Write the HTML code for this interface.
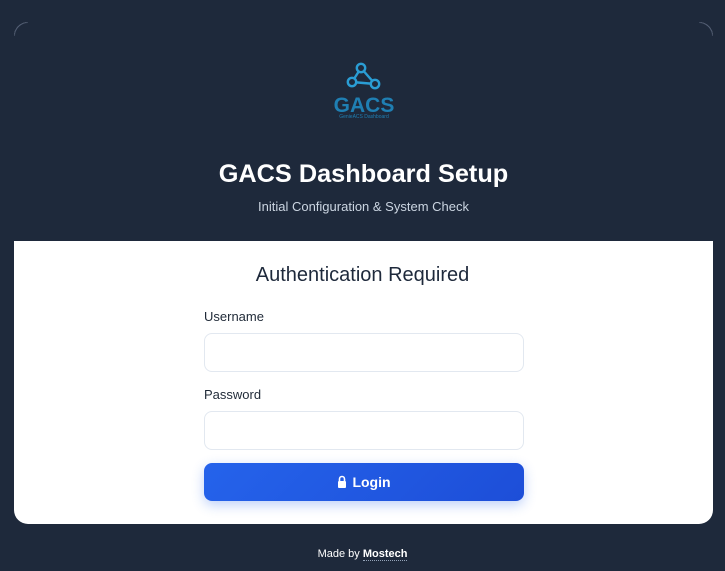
<!DOCTYPE html>
<html><head><style>
*{box-sizing:border-box;margin:0;padding:0}
body{width:725px;height:571px;background:#1e293b;font-family:"Liberation Sans",sans-serif;position:relative;overflow:hidden}
.card{position:absolute;left:14px;top:22px;width:699px;height:502px;border-radius:14px;overflow:hidden;background:#fff}
.head{height:219px;background:#1e293b;text-align:center;position:relative}
.corner{position:absolute;top:22px;width:14px;height:14px;border:1px solid #56627a;}
.cl{left:14px;border-right:none;border-bottom:none;border-top-left-radius:14px;-webkit-mask:linear-gradient(135deg,#000 30%,transparent 70%)}
.cr{left:699px;border-left:none;border-bottom:none;border-top-right-radius:14px;-webkit-mask:linear-gradient(225deg,#000 30%,transparent 70%)}
h1{position:absolute;top:138px;width:100%;color:#fff;font-size:25.3px;font-weight:bold}
.sub{position:absolute;top:177px;width:100%;color:#cbd5e1;font-size:13px}
h2{position:absolute;top:264px;width:100%;text-align:center;font-size:20px;font-weight:normal;color:#1e293b}
label{position:absolute;left:204px;font-size:13px;color:#1f2937}
.in{position:absolute;left:204px;width:320px;height:39px;border:1px solid #e2e8f0;border-radius:8px;background:#fff}
.btn{position:absolute;left:204px;top:463px;width:320px;height:38px;border-radius:8px;background:linear-gradient(135deg,#2563eb,#1d4ed8);box-shadow:0 4px 12px rgba(37,99,235,.3);color:#fff;font-size:14px;font-weight:bold;text-align:center;line-height:38px}
.foot{position:absolute;top:548px;width:100%;text-align:center;color:#fff;font-size:11px}
.foot b{border-bottom:1px dotted #94a3b8}
</style></head><body>
<div class="card"><div class="head">
<h1>GACS Dashboard Setup</h1>
<div class="sub">Initial Configuration &amp; System Check</div>
</div></div>
<svg style="position:absolute;left:316px;top:50px" width="90" height="72" viewBox="316 50 90 72">
<g stroke="#2a9dd4" stroke-width="2.4" fill="none"><line x1="361" y1="68" x2="352" y2="82"/><line x1="361" y1="68" x2="375" y2="84"/><line x1="352" y1="82" x2="375" y2="84"/>
<circle cx="361" cy="68" r="4.2" fill="#1e293b"/><circle cx="352" cy="82" r="4.2" fill="#1e293b"/><circle cx="375" cy="84" r="4.2" fill="#1e293b"/></g>
<text x="364" y="112" text-anchor="middle" font-family="Liberation Sans" font-size="21" font-weight="bold" fill="#1f7fb3">GACS</text>
<text x="364" y="118" text-anchor="middle" font-family="Liberation Sans" font-size="5" fill="#1f7fb3">GenieACS Dashboard</text>
</svg>
<div class="corner cl"></div><div class="corner cr"></div>
<h2>Authentication Required</h2>
<label style="top:309px">Username</label>
<div class="in" style="top:333px"></div>
<label style="top:387px">Password</label>
<div class="in" style="top:411px"></div>
<div class="btn"><svg width="10" height="13" viewBox="0 0 10 13" style="vertical-align:-1px;margin-right:5px"><path d="M2.5 6V4a2.5 2.5 0 0 1 5 0v2" stroke="#fff" stroke-width="1.6" fill="none"/><rect x="1" y="6" width="8" height="7" rx="1" fill="#fff"/></svg>Login</div>
<div class="foot">Made by <b>Mostech</b></div>
</body></html>
